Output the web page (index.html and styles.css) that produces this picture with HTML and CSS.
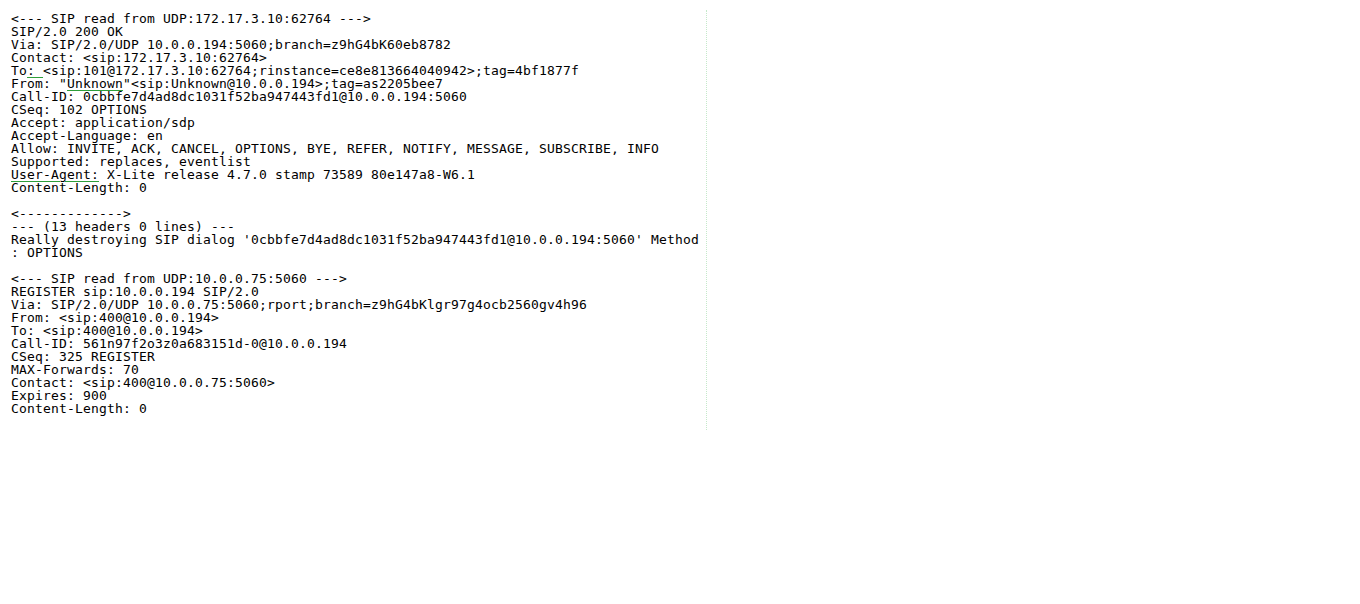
FILE: index.html
```html
<!DOCTYPE html>
<html lang="en">
<head>
<meta charset="utf-8">
<title>SIP log</title>
<link rel="stylesheet" href="styles.css">
</head>
<body>
<pre class="log">&lt;--- SIP read from UDP:172.17.3.10:62764 ---&gt;
SIP/2.0 200 OK
Via: SIP/2.0/UDP 10.0.0.194:5060;branch=z9hG4bK60eb8782
Contact: &lt;sip:172.17.3.10:62764&gt;
To<span class="mark">: </span>&lt;sip:101@172.17.3.10:62764;rinstance=ce8e813664040942&gt;;tag=4bf1877f
From: "<span class="mark">Unknown</span>"&lt;sip:Unknown@10.0.0.194&gt;;tag=as2205bee7
Call-ID: 0cbbfe7d4ad8dc1031f52ba947443fd1@10.0.0.194:5060
CSeq: 102 OPTIONS
Accept: application/sdp
Accept-Language: en
Allow: INVITE, ACK, CANCEL, OPTIONS, BYE, REFER, NOTIFY, MESSAGE, SUBSCRIBE, INFO
Supported: replaces, eventlist
<span class="mark">User-Agent:</span> X-Lite release 4.7.0 stamp 73589 80e147a8-W6.1
Content-Length: 0

&lt;-------------&gt;
--- (13 headers 0 lines) ---
Really destroying SIP dialog '0cbbfe7d4ad8dc1031f52ba947443fd1@10.0.0.194:5060' Method
: OPTIONS

&lt;--- SIP read from UDP:10.0.0.75:5060 ---&gt;
REGISTER sip:10.0.0.194 SIP/2.0
Via: SIP/2.0/UDP 10.0.0.75:5060;rport;branch=z9hG4bKlgr97g4ocb2560gv4h96
From: &lt;sip:400@10.0.0.194&gt;
To: &lt;sip:400@10.0.0.194&gt;
Call-ID: 561n97f2o3z0a683151d-0@10.0.0.194
CSeq: 325 REGISTER
MAX-Forwards: 70
Contact: &lt;sip:400@10.0.0.75:5060&gt;
Expires: 900
Content-Length: 0</pre>
</body>
</html>
```
FILE: styles.css
```css
html, body {
  background: #ffffff;
}

body {
  margin: 8px;
}

.log {
  box-sizing: border-box;
  width: 699px;
  height: 420px;
  margin: 2px 0 0 0;
  padding: 2px 0 0 3px;
  border-right: 1px dotted #c6e9cb;
  font-family: "DejaVu Sans Mono", "Liberation Mono", monospace;
  font-size: 13px;
  letter-spacing: 0.174px;
  line-height: 13px;
  color: #000000;
  white-space: pre;
  overflow: hidden;
}

.mark {
  text-decoration: underline;
  text-decoration-color: #2e9e3a;
  text-decoration-thickness: 1px;
  text-underline-offset: 2px;
}
```
